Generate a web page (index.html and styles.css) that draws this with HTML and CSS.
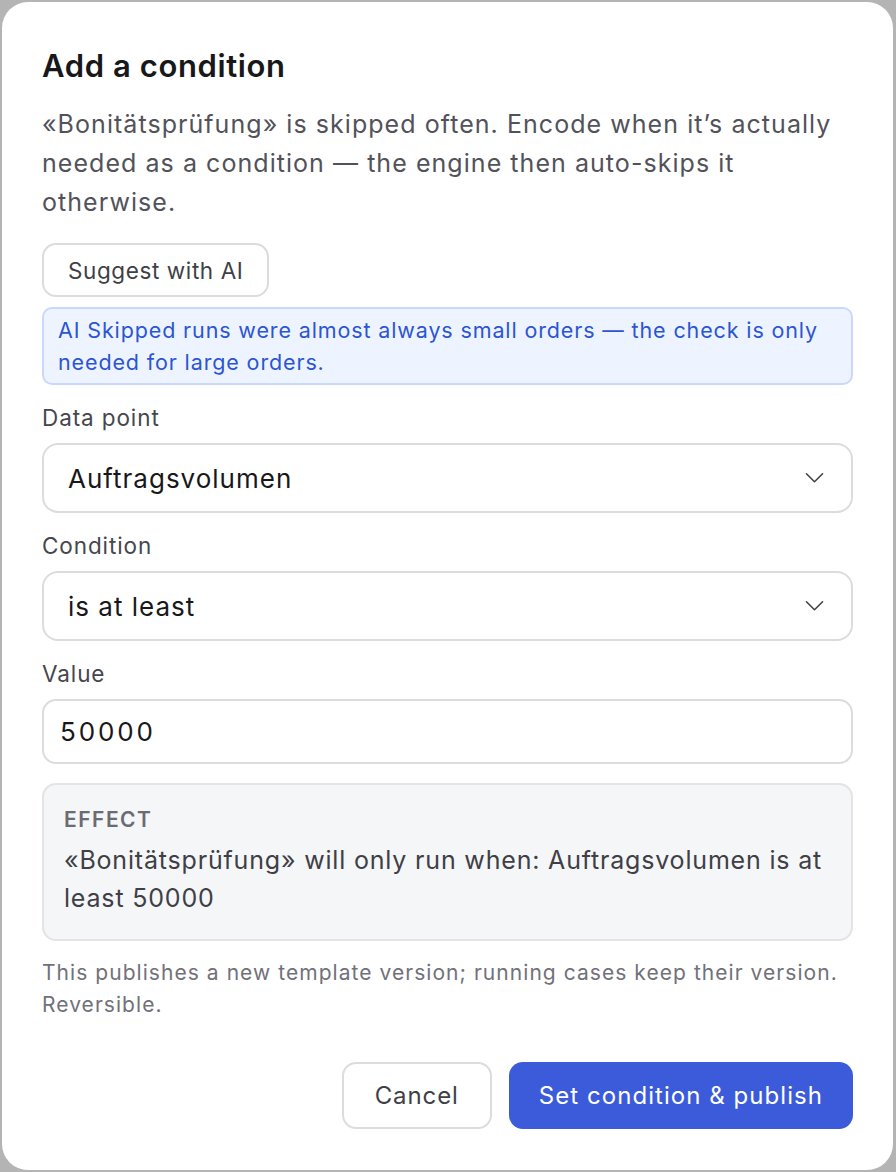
FILE: index.html
```html
<!DOCTYPE html>
<html lang="en">
<head>
<meta charset="utf-8">
<title>Add a condition</title>
<link rel="stylesheet" href="styles.css">
</head>
<body>
<div class="dialog">
  <h1 class="title">Add a condition</h1>
  <p class="intro">«Bonitätsprüfung» is skipped often. Encode when it’s actually needed as a condition — the engine then auto-skips it otherwise.</p>
  <div class="suggest-row"><button class="btn-outline suggest">Suggest with AI</button></div>
  <div class="ai-box">AI Skipped runs were almost always small orders — the check is only needed for large orders.</div>

  <div class="field">
    <div class="label">Data point</div>
    <div class="select"><span>Auftragsvolumen</span>
      <svg class="chev" width="20" height="12" viewBox="0 0 20 12"><path d="M1.5 1.5 L10 10 L18.5 1.5" fill="none" stroke="#3f3f46" stroke-width="1.6" stroke-linecap="round" stroke-linejoin="round"/></svg>
    </div>
  </div>

  <div class="field">
    <div class="label">Condition</div>
    <div class="select"><span>is at least</span>
      <svg class="chev" width="20" height="12" viewBox="0 0 20 12"><path d="M1.5 1.5 L10 10 L18.5 1.5" fill="none" stroke="#3f3f46" stroke-width="1.6" stroke-linecap="round" stroke-linejoin="round"/></svg>
    </div>
  </div>

  <div class="field">
    <div class="label">Value</div>
    <div class="input">50000</div>
  </div>

  <div class="effect">
    <div class="effect-head">EFFECT</div>
    <div class="effect-text">«Bonitätsprüfung» will only run when: Auftragsvolumen is at least 50000</div>
  </div>

  <p class="note">This publishes a new template version; running cases keep their version. Reversible.</p>

  <div class="actions">
    <button class="btn-outline cancel">Cancel</button>
    <button class="btn-primary">Set condition &amp; publish</button>
  </div>
</div>
</body>
</html>
```
FILE: styles.css
```css
html, body {
  margin: 0;
  padding: 0;
}
body {
  background: #b4b4b4;
  width: 896px;
  height: 1172px;
  padding: 2px 3px 2px 2px;
  box-sizing: border-box;
  font-family: Inter, "Noto Sans", sans-serif;
}
.dialog {
  background: #ffffff;
  border-radius: 26px;
  height: 100%;
  box-sizing: border-box;
  padding: 46px 40px 0 40px;
  display: flex;
  flex-direction: column;
}
.title {
  margin: 0;
  font-size: 31px;
  font-weight: 600;
  color: #18181b;
  line-height: 36px;
  letter-spacing: 0.6px;
}
.intro {
  margin: 21px 0 0;
  font-size: 25px;
  line-height: 39px;
  color: #52525b;
  letter-spacing: 1.05px;
}
.suggest-row {
  margin-top: 21px;
  display: flex;
}
button {
  font-family: inherit;
  cursor: pointer;
}
.btn-outline {
  background: #ffffff;
  border: 2px solid #dcdcdc;
  border-radius: 14px;
  color: #3f3f46;
}
.suggest {
  height: 54px;
  padding: 0 24px;
  font-size: 22.5px;
  letter-spacing: 0.6px;
}
.ai-box {
  margin-top: 10px;
  background: #eef4ff;
  border: 2px solid #c9d8fd;
  border-radius: 10px;
  color: #2c55d3;
  font-size: 21.5px;
  line-height: 32px;
  padding: 5px 14px;
  letter-spacing: 0.87px;
}
.field {
  margin-top: 17px;
  display: flex;
  flex-direction: column;
}
.label {
  font-size: 22.5px;
  line-height: 32px;
  color: #46464d;
  margin-bottom: 9px;
  letter-spacing: 0.9px;
}
.select {
  height: 70px;
  box-sizing: border-box;
  border: 2px solid #dcdcdc;
  border-radius: 16px;
  display: flex;
  align-items: center;
  justify-content: space-between;
  padding: 0 27px 0 24px;
  font-size: 26px;
  color: #18181b;
  letter-spacing: 1px;
}
.chev {
  width: 19px;
  height: 12px;
}
.input {
  height: 65px;
  box-sizing: border-box;
  border: 2px solid #dcdcdc;
  border-radius: 14px;
  display: flex;
  align-items: center;
  padding: 0 16px;
  font-size: 26px;
  color: #18181b;
  letter-spacing: 2.9px;
}
.effect {
  margin-top: 19px;
  background: #f5f6f8;
  border: 2px solid #e4e4e7;
  border-radius: 14px;
  padding: 20px 20px 22px;
}
.effect-head {
  font-size: 21px;
  font-weight: 600;
  color: #6b6b73;
  letter-spacing: 1.5px;
  line-height: 30px;
}
.effect-text {
  margin-top: 6px;
  font-size: 25px;
  line-height: 38px;
  color: #3f3f46;
  letter-spacing: 0.82px;
}
.note {
  margin: 16px 0 0;
  font-size: 21px;
  line-height: 32px;
  color: #71717a;
  letter-spacing: 1.05px;
}
.actions {
  margin-top: 41px;
  display: flex;
  justify-content: flex-end;
  gap: 17px;
}
.cancel {
  height: 67px;
  padding: 0 31px;
  font-size: 24px;
  letter-spacing: 0.9px;
}
.btn-primary {
  height: 67px;
  padding: 0 30px;
  font-size: 24px;
  background: #3b5bdb;
  color: #ffffff;
  border: none;
  border-radius: 14px;
  letter-spacing: 1.05px;
}
```
